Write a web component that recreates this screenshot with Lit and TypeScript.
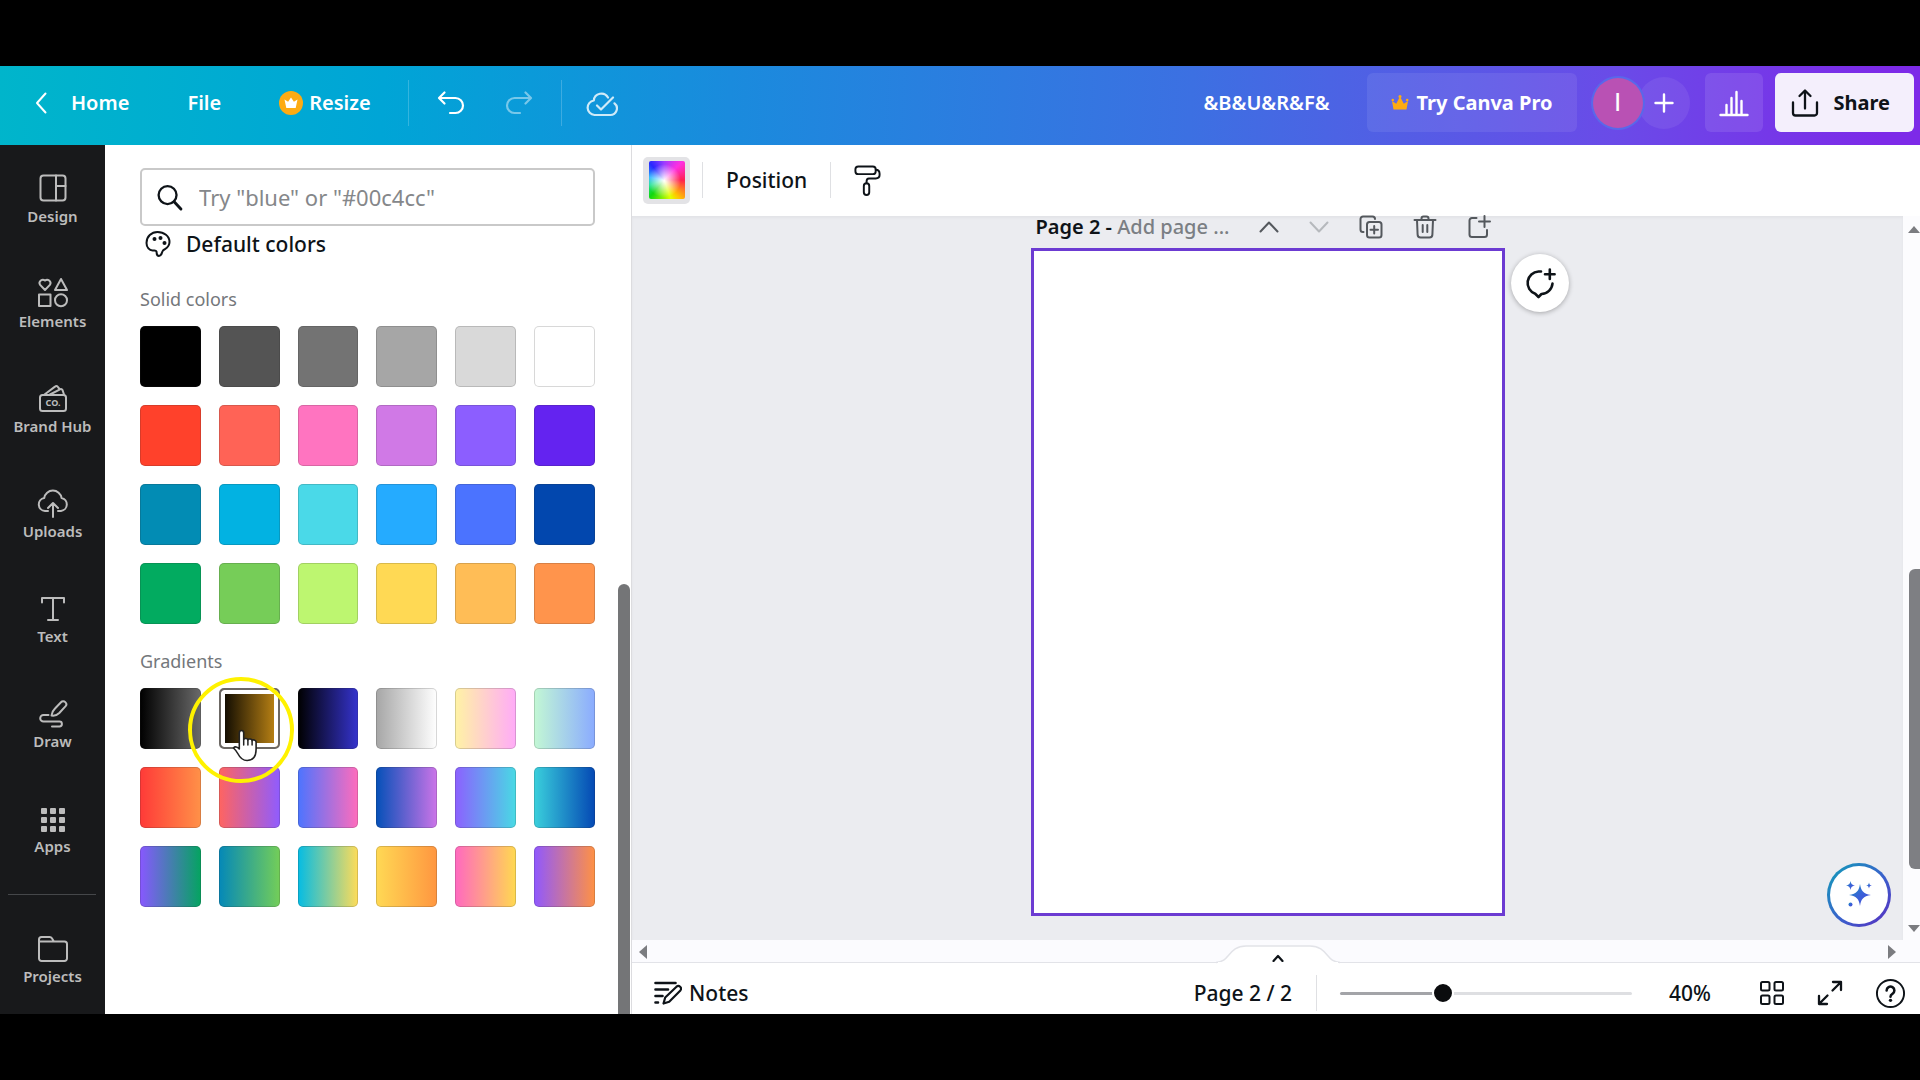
import { LitElement, html, svg, css, nothing } from "lit";
import { customElement, property, state } from "lit/decorators.js";
import { classMap } from "lit/directives/class-map.js";
import { styleMap } from "lit/directives/style-map.js";

const ICONS: Record<string, { box: string; body: unknown }> = {
  back: { box: "0 0 12 22", body: svg`<path d="M10.500 1.500 2 11l8.500 9.500" stroke-width="2"/>` },
  crownBadge: {
    box: "0 0 24 24",
    body: svg`<circle cx="12" cy="12" r="12" fill="#fdab12" stroke="none"/><path d="M5.500 8.500l3.600 2.300L12 6.500l2.900 4.300 3.600-2.300-1.800 8.500H7.300z" fill="#fff" stroke="none"/>`,
  },
  crown: {
    box: "0 0 18 18",
    body: svg`<path d="M2.500 15.500h13L17 7l-4.200 2.700L9 2.500 5.200 9.700 1 7z" fill="#fdab12" stroke="none"/><circle cx="1.800" cy="6" r="1.300" fill="#fdab12" stroke="none"/><circle cx="9" cy="2.600" r="1.500" fill="#fdab12" stroke="none"/><circle cx="16.200" cy="6" r="1.300" fill="#fdab12" stroke="none"/>`,
  },
  undo: { box: "0 0 28 26", body: svg`<path d="M7.500 2.500 2 8l5.500 5.500M2.500 8h16a7.500 7.500 0 0 1 0 15h-5.500" stroke-width="2.200"/>` },
  redo: { box: "0 0 28 26", body: svg`<path d="M20.500 2.500 26 8l-5.500 5.500M25.500 8h-16a7.500 7.500 0 0 0 0 15H15" stroke-width="2.200"/>` },
  cloudCheck: {
    box: "0 0 32 28",
    body: svg`<path d="M22 8.500A7.600 7.600 0 0 0 7.800 11.500 7.300 7.300 0 0 0 8.500 26h15.800a6.600 6.600 0 0 0 4.200-11.700M11 16.500l4 4L27 8.500" stroke-width="2.200"/>`,
  },
  plus: { box: "0 0 20 20", body: svg`<path d="M10 1.500v17M1.500 10h17" stroke-width="2.400"/>` },
  chart: { box: "0 0 30 28", body: svg`<path d="M1.500 26h27M7.500 25v-9M12.500 25V9M17.500 25V3M22.500 25V12" stroke-width="2.400"/>` },
  share: { box: "0 0 28 30", body: svg`<path d="M14 20.500V3M8.500 8 14 2.500 19.500 8M2 14.500V25a2.500 2.500 0 0 0 2.500 2.500h19A2.500 2.500 0 0 0 26 25V14.500" stroke-width="2.300"/>` },
  design: { box: "0 0 30 30", body: svg`<rect x="2.500" y="2.500" width="25" height="25" rx="3"/><path d="M18 2.500v25M18 13h9.500"/>` },
  elements: {
    box: "0 0 32 32",
    body: svg`<path d="M8 14 2.900 8.600A3.300 3.300 0 0 1 8 4.600a3.300 3.300 0 0 1 5.100 4zM24 3l6 11H18z"/><rect x="2" y="18.500" width="11.500" height="11.500"/><circle cx="24" cy="24.300" r="6"/>`,
  },
  brand: {
    box: "0 0 30 30",
    body: svg`<rect x="2" y="12" width="26" height="16" rx="2.500"/><path d="M6.500 11.500 17 3.600a2 2 0 0 1 2.800.3L21.500 6M12 11.500 22 6.300a2 2 0 0 1 2.600.9l1.400 4.300"/><text x="15" y="23" text-anchor="middle" font-size="9" font-weight="700" fill="currentColor" stroke="none">CO.</text>`,
  },
  uploads: { box: "0 0 32 30", body: svg`<path d="M11 23H8a6.500 6.500 0 0 1-.8-12.900A8.800 8.800 0 0 1 24.600 10 6.600 6.600 0 0 1 24 23h-3M16 29V15.500M11 20l5-5 5 5"/>` },
  text: { box: "0 0 28 28", body: svg`<path d="M3 7.500V3h22v4.500M14 3v22M9 25h10"/>` },
  draw: {
    box: "0 0 30 30",
    body: svg`<path d="M13.500 17.500c.2-3 1.500-5 3.500-7l6-6.300a3 3 0 0 1 4.400 4.200L21.300 15c-2 2-4.600 3-7.800 2.500zM10.500 17H5.500a3.300 3.300 0 0 0 0 6.600h16a2.400 2.400 0 0 1 0 4.800H14"/>`,
  },
  apps: {
    box: "0 0 26 26",
    body: svg`${[1, 10, 19].map((y) => [1, 10, 19].map((x) => svg`<rect x=${x} y=${y} width="6" height="6" rx="1" fill="currentColor" stroke="none"/>`))}`,
  },
  folder: { box: "0 0 32 28", body: svg`<path d="M2 23.500V4.500A2.500 2.500 0 0 1 4.500 2h8.200c1 0 1.700.4 2.200 1.200l2 3.300h10.600A2.500 2.500 0 0 1 30 9v14.500a2.500 2.500 0 0 1-2.500 2.500h-23A2.500 2.500 0 0 1 2 23.500zM2 6.500h14"/>` },
  search: { box: "0 0 28 28", body: svg`<circle cx="12" cy="11.500" r="9.300" stroke-width="2.400"/><path d="m18.800 18.500 7 7.500" stroke-width="3"/>` },
  palette: {
    box: "0 0 26 28",
    body: svg`<path d="M12.500 2C6.500 2 1.500 6.500 1.500 13c0 4.500 3 7.500 6 7.500 2.500 0 3.500-.5 4 1 .4 1.600-.5 4.500 2.500 4.500 3 0 2.300-3.300 4-5.500 2-2 6.500-2.500 6.500-8.500 0-6-5.500-10-12-10z" stroke-width="2"/><g fill="currentColor" stroke="none"><circle cx="9.500" cy="9" r="2"/><circle cx="15.500" cy="8" r="2"/><circle cx="19.500" cy="13" r="2"/></g>`,
  },
  roller: {
    box: "0 0 30 34",
    body: svg`<rect x="2.500" y="2.500" width="21" height="8" rx="3"/><path d="M23.500 6c3 0 4 1.500 4 4v1.500c0 2.500-1.500 3.500-4 3.500h-7c-2 0-2.500 1-2.500 3.500V20"/><rect x="11.200" y="20" width="5.600" height="12" rx="2.800"/>`,
  },
  up: { box: "0 0 20 12", body: svg`<path d="m1.500 10.500 8.500-9 8.500 9"/>` },
  down: { box: "0 0 20 12", body: svg`<path d="m1.500 1.500 8.500 9 8.500-9"/>` },
  caret: { box: "0 0 12 8", body: svg`<path d="M1.500 7 6 2l4.500 5" stroke-width="2.200"/>` },
  duplicate: { box: "0 0 24 24", body: svg`<rect x="8" y="7" width="14.500" height="15.500" rx="2.500"/><path d="M15.200 11v7.500M11.500 14.800H19M4.500 17H4a2.500 2.500 0 0 1-2.500-2.500V4A2.500 2.500 0 0 1 4 1.500h9.500A2.500 2.500 0 0 1 16 4"/>` },
  trash: { box: "0 0 24 24", body: svg`<path d="M1.500 5h21M4 5l.6 14.500a3 3 0 0 0 3 3h8.800a3 3 0 0 0 3-3L20 5M8.500 5V3.500a2 2 0 0 1 2-2h3a2 2 0 0 1 2 2V5M9.700 10v7M14.300 10v7"/>` },
  addPage: { box: "0 0 24 24", body: svg`<path d="M9.500 3H5a2.500 2.500 0 0 0-2.500 2.500v14A2.500 2.500 0 0 0 5 22h12.500a2.500 2.500 0 0 0 2.500-2.500V15M17.500 1v11M12 6.500h11"/>` },
  comment: {
    box: "0 0 32 32",
    body: svg`<path d="M17 4.500h-2.500A11.500 11.500 0 0 0 11.200 26.800L14.500 30l3-3A11.500 11.500 0 0 0 28.500 16.500M25.800 2.500v9.500M21 7.200h9.600" stroke-width="2.600"/>`,
  },
  notes: {
    box: "0 0 28 26",
    body: svg`<path d="M1.500 3h20M1.500 9.500H14M1.500 16h7M1.500 22.500h2.500" stroke-width="2.600"/><path d="m9.500 23.500 1.700-6L22.500 6.700a2.700 2.700 0 0 1 3.900 3.700L15.200 21.700z" stroke-width="2.200"/>`,
  },
  grid: {
    box: "0 0 26 26",
    body: svg`<rect x="2" y="2" width="8.500" height="8.500" rx="1.500"/><rect x="15.500" y="2" width="8.500" height="8.500" rx="1.500"/><rect x="2" y="15.500" width="8.500" height="8.500" rx="1.500"/><rect x="15.500" y="15.500" width="8.500" height="8.500" rx="1.500"/>`,
  },
  expand: { box: "0 0 26 26", body: svg`<path d="M16 2h8v8M24 2l-8.500 8.500M2 16v8h8M2 24l8.500-8.500" stroke-width="2.300"/>` },
  help: { box: "0 0 32 32", body: svg`<circle cx="16" cy="16" r="14"/><path d="M12 12.800a4 4 0 1 1 6 3.500c-1.400.8-2 1.500-2 3" stroke-width="2.600"/><circle cx="16" cy="23" r="1.700" fill="currentColor" stroke="none"/>` },
  magic: {
    box: "0 0 28 28",
    body: svg`<defs><linearGradient id="spark" x1="0" y1="0" x2="1" y2="1"><stop offset="0" stop-color="#1296b8"/><stop offset=".5" stop-color="#3a62d8"/><stop offset="1" stop-color="#4a4ad8"/></linearGradient></defs><g fill="url(#spark)" stroke="none"><path d="M15 3c1.200 7 3 9.500 11 11-8 1.500-9.800 4-11 11-1.200-7-3-9.500-11-11 8-1.500 9.800-4 11-11z"/><path d="M5.500 0c.6 3 1.400 3.900 4.500 4.500C6.900 5.100 6.100 6 5.500 9 4.900 6 4.100 5.100 1 4.500 4.100 3.900 4.900 3 5.500 0z"/><path d="M24 1.500c.4 2.100 1 2.600 3 3-2 .4-2.600.9-3 3-.4-2.100-1-2.600-3-3 2-.4 2.600-.9 3-3z"/><circle cx="5.500" cy="23.500" r="2"/></g>`,
  },
  hand: {
    box: "0 0 28 34",
    body: svg`<path d="M9.500 2.500c1.500 0 2.200 1 2.200 2.400v6.600c0-1.500 4.200-1.500 4.200.5 0-1.400 4.200-1.300 4.200.7 0-1.300 4-1.200 4 1.300V21c0 7-3 11.500-9 11.500-5 0-7-2.500-9-6.500-1.300-2.500-3-4.500-4.600-6 1.500-2 4-1.200 5.800 1V4.900c0-1.400.7-2.400 2.200-2.400z" fill="#fff" stroke="#222" stroke-width="1.600"/><path d="M11.700 11v6M15.900 12v5M20.100 13v4" stroke="#222" stroke-width="1.500"/>`,
  },
};

@customElement("ui-icon")
export class UiIcon extends LitElement {
  @property() name = "";
  @property({ type: Number }) size = 24;

  static styles = css`
    :host { display: inline-flex; flex: none; }
    .glyph { display: block; fill: none; stroke: currentColor; stroke-width: 2; stroke-linecap: round; stroke-linejoin: round; font-family: "Noto Sans", sans-serif; }
  `;

  render() {
    const icon = ICONS[this.name];
    return icon
      ? html`<svg class="glyph" width=${this.size} viewBox=${icon.box} aria-hidden="true">${icon.body}</svg>`
      : nothing;
  }
}

const SIDE_ITEMS = [
  { icon: "design", size: 30, label: "Design" },
  { icon: "elements", size: 32, label: "Elements" },
  { icon: "brand", size: 30, label: "Brand Hub" },
  { icon: "uploads", size: 32, label: "Uploads" },
  { icon: "text", size: 28, label: "Text" },
  { icon: "draw", size: 30, label: "Draw" },
  { icon: "apps", size: 26, label: "Apps" },
];

const SOLIDS = [
  "#000000", "#545454", "#737373", "#a6a6a6", "#d9d9d9", "#ffffff",
  "#ff412b", "#ff6356", "#ff74c0", "#d079e6", "#8c5eff", "#6423f0",
  "#028cb4", "#02b2e2", "#4ad9e8", "#25abff", "#4b73ff", "#0247ae",
  "#02ab60", "#76cd58", "#bdf670", "#ffd954", "#ffbd56", "#ff944c",
];

const GRADIENTS: [string, string][] = [
  ["#000000", "#6a6a6a"], ["#000000", "#c88c16"], ["#000000", "#3533cd"],
  ["#a6a6a6", "#ffffff"], ["#fff3a4", "#ffabf8"], ["#c3f8d4", "#8aabff"],
  ["#ff3a38", "#ff9148"], ["#ff6460", "#8f5cff"], ["#4c74ff", "#ff6cbc"],
  ["#0450b8", "#cc74e8"], ["#8c60ff", "#48dae4"], ["#3ad0dc", "#0448b4"],
  ["#8858ff", "#04a460"], ["#0488b8", "#74ce58"], ["#04bce4", "#ffdc58"],
  ["#ffd954", "#ff9640"], ["#ff68c0", "#ffd950"], ["#8f58ff", "#ff9144"],
];

@customElement("color-panel")
export class ColorPanel extends LitElement {
  @state() private hovered = 1;

  static styles = css`
    :host { display: flex; min-height: 0; background: #fff; color: #0e1318; position: relative; }
    .content { flex: 1; padding: 23px 23px 0 35px; }
    .search { display: flex; align-items: center; gap: 16px; height: 58px; box-sizing: border-box; border: 2px solid #c9c9c9; border-radius: 5px; padding: 0 14px; }
    .field { flex: 1; min-width: 0; border: 0; outline: 0; padding: 0; background: none; font: inherit; font-size: 22px; color: inherit; }
    .field::placeholder { color: #85878a; opacity: 1; }
    .heading { display: flex; align-items: center; gap: 15px; margin: 3px 0 0 5px; height: 30px; padding-bottom: 3px; font-size: 21px; font-weight: 500; }
    .label { margin: 24px 0 14px; font-size: 18px; line-height: 26px; font-weight: 400; color: #74777b; }
    .swatches { display: grid; grid-template-columns: repeat(6, 1fr); gap: 18px; }
    .swatch { height: 61px; padding: 0; border: 1px solid rgba(40, 40, 40, 0.18); border-radius: 5px; background-origin: border-box; cursor: pointer; }
    .hover { border: 2px solid #6c6864; box-shadow: inset 0 0 0 4px #fff; }
    .scroll { flex: none; width: 12px; margin: 439px 1px 0 0; border-radius: 6px 6px 0 0; background: #747577; }
    .spot { position: absolute; left: 83px; top: 532px; width: 98px; height: 98px; border: 4px solid #fff200; border-radius: 50%; pointer-events: none; }
    .pointer { position: absolute; left: 127px; top: 583px; pointer-events: none; }
  `;

  render() {
    return html`
      <div class="content">
        <label class="search">
          <ui-icon name="search" size="27"></ui-icon>
          <input class="field" type="search" aria-label="Search colors" placeholder='Try "blue" or "#00c4cc"' />
        </label>
        <h2 class="heading"><ui-icon name="palette" size="26"></ui-icon>Default colors</h2>
        <h3 class="label">Solid colors</h3>
        <div class="swatches">
          ${SOLIDS.map((c) => html`<button class="swatch" aria-label=${c} style=${styleMap({ backgroundColor: c })}></button>`)}
        </div>
        <h3 class="label">Gradients</h3>
        <div class="swatches">
          ${GRADIENTS.map(
            ([a, b], i) => html`<button
              class=${classMap({ swatch: true, hover: i === this.hovered })}
              aria-label="${a} to ${b}"
              style=${styleMap({ backgroundImage: `linear-gradient(90deg, ${a}, ${b})` })}
              @mouseenter=${() => (this.hovered = i)}
            ></button>`
          )}
        </div>
      </div>
      <div class="scroll"></div>
      <div class="spot"></div>
      <ui-icon class="pointer" name="hand" size="28"></ui-icon>
    `;
  }
}

@customElement("app-root")
export class AppRoot extends LitElement {
  @state() private zoom = 34;

  static styles = css`
    :host { display: block; font-family: "Noto Sans", "Liberation Sans", sans-serif; font-size: 20px; color: #0e1318; }
    button { font: inherit; color: inherit; background: none; border: 0; padding: 0; cursor: pointer; display: flex; align-items: center; justify-content: center; white-space: nowrap; }
    a { color: inherit; text-decoration: none; }
    .frame { box-sizing: border-box; min-height: 100vh; padding: 66px 0; background: #000; display: flex; flex-direction: column; }
    .header { height: 79px; box-sizing: border-box; display: flex; align-items: center; padding: 0 6px 6px; color: #fff; font-weight: 600; background: linear-gradient(93deg, #00b5cb 0%, #00a5d6 20%, #1a8bdd 38%, #3c70e2 62%, #6a4be8 84%, #7d2ae8 98%); }
    .nav { height: 58px; padding: 0 29px; display: flex; align-items: center; gap: 6px; }
    .home { gap: 24px; }
    .rule { width: 1px; height: 46px; background: rgba(255, 255, 255, 0.2); }
    .tool { height: 58px; padding: 0 20px; }
    .after { margin-left: 8px; }
    .near { margin-left: 4px; }
    .dim { color: rgba(255, 255, 255, 0.45); }
    .soft { color: rgba(255, 255, 255, 0.8); }
    .grow { flex: 1; }
    .doc { margin-right: 37px; }
    .pro { height: 59px; padding: 0 24px; gap: 8px; border-radius: 6px; background: rgba(255, 255, 255, 0.08); margin-right: 16px; font-weight: 700; }
    .avatar { width: 50px; height: 50px; border-radius: 50%; background: #b951b4; box-shadow: 0 0 0 2px #5968ea; font-family: "Liberation Sans", Inter, sans-serif; font-weight: 400; font-size: 26px; z-index: 1; }
    .add { width: 52px; height: 52px; border-radius: 50%; background: rgba(255, 255, 255, 0.07); margin: 0 15px 0 -5px; }
    .stats { width: 58px; height: 59px; border-radius: 6px; background: rgba(255, 255, 255, 0.1); margin-right: 12px; }
    .share { height: 59px; padding: 0 24px 0 16px; gap: 15px; border-radius: 6px; background: #f4effc; color: #0e1318; font-weight: 700; }
    .body { flex: 1; display: grid; grid-template-columns: 105px 526px 1fr; }
    .side { background: #18191b; color: #bcbcbc; display: flex; flex-direction: column; font-size: 15px; font-weight: 600; }
    .entry { height: 105px; display: flex; flex-direction: column; align-items: center; justify-content: flex-start; box-sizing: border-box; padding-top: 25px; }
    .entry:last-child { height: auto; }
    .pic { height: 33px; display: flex; align-items: flex-end; }
    .name { line-height: 26px; }
    .split { height: 1px; margin: 14px 9px 10px 8px; background: #45474a; }
    .work { min-width: 0; display: flex; flex-direction: column; border-left: 1px solid #dcdcdf; background: #fff; }
    .bar { height: 71px; box-sizing: border-box; padding-bottom: 1px; display: flex; align-items: center; font-size: 21px; font-weight: 500; }
    .paint { width: 47px; height: 47px; margin: 0 12px 0 11px; border-radius: 5px; background: #e3e3e6; }
    .rainbow { width: 36px; height: 38px; border-radius: 2px; background: radial-gradient(circle at 42% 52%, #fff 0, rgba(255, 255, 255, 0) 58%), conic-gradient(from 0deg at 42% 50%, #9c3cff, #ff30e0 45deg, #ff2050 90deg, #ffc400 140deg, #e0ff00 160deg, #10d810 220deg, #18e090 250deg, #20b8ff 280deg, #2828ff 320deg, #9c3cff); }
    .line { width: 1px; height: 36px; background: #dfe0e3; }
    .position { padding: 0 23px; height: 48px; }
    .roll { padding: 0 22px; height: 48px; }
    .view { flex: 1; display: grid; grid-template-columns: 1fr 17px; grid-template-rows: 1fr 23px; }
    .stage { position: relative; background: #ebecf0; display: flex; flex-direction: column; align-items: center; padding-bottom: 24px; box-shadow: inset 0 2px 3px rgba(0, 0, 0, 0.04); }
    .sheet { flex: 1; width: 474px; display: flex; flex-direction: column; }
    .tools { display: flex; align-items: center; height: 22px; padding: 0 14px 10px 5px; color: #54585d; }
    .title { flex: 1; line-height: 22px; color: #7b7f84; font-weight: 500; margin: 0; white-space: nowrap; }
    .strong { color: #0e1318; font-weight: 600; }
    .ops { display: flex; align-items: center; gap: 30px; }
    .faint { color: #b6b9bd; }
    .paper { position: relative; flex: 1; background: #fff; border: 3px solid #6c3bd2; }
    .comment { position: absolute; left: calc(100% + 9px); top: 3px; width: 58px; height: 58px; border-radius: 50%; background: #fff; box-shadow: 0 1px 5px rgba(0, 0, 0, 0.3); }
    .magic { position: absolute; right: 12px; bottom: 13px; width: 64px; height: 64px; box-sizing: border-box; border: 3px solid transparent; border-radius: 50%; background: linear-gradient(#fff, #fff) padding-box, linear-gradient(135deg, #10a0b8, #3a60cc 55%, #5a2cc0) border-box; }
    .vscroll { background: #fcfcfe; display: flex; flex-direction: column; align-items: flex-end; padding: 10px 0 8px; color: #7b7c80; }
    .thumb { width: 11px; height: 300px; margin: auto 0 56px; border-radius: 6px 0 0 6px; background: #7e7f83; }
    .tri-up, .tri-down { width: 0; border: 6px solid transparent; }
    .tri-up { border-top: 0; border-bottom: 7px solid currentColor; }
    .tri-down { border-bottom: 0; border-top: 7px solid currentColor; }
    .hscroll { grid-column: 1 / -1; position: relative; box-sizing: border-box; background: #fbfbfe; border-bottom: 1px solid #e2e3e8; display: flex; align-items: center; justify-content: space-between; padding: 1px 24px 0 7px; color: #7b7c80; }
    .tri-left, .tri-right { width: 0; border: 7px solid transparent; }
    .tri-left { border-left: 0; border-right: 8px solid currentColor; }
    .tri-right { border-right: 0; border-left: 8px solid currentColor; }
    .tab { position: absolute; left: 50%; bottom: -3px; margin-left: -60px; width: 124px; height: 20px; color: #0e1318; }
    .hump { position: absolute; inset: 0; }
    .tab ui-icon { position: relative; top: 3px; }
    .footer { height: 51px; box-sizing: border-box; padding-top: 9px; display: flex; align-items: center; color: #0e1318; font-size: 21px; font-weight: 500; }
    .notes { gap: 7px; height: 40px; padding: 0 22px; }
    .count { margin-right: 24px; }
    .slider { appearance: none; width: 292px; height: 24px; margin: 0 37px 0 23px; background: none; }
    .slider::-webkit-slider-runnable-track { height: 3px; border-radius: 2px; background: linear-gradient(90deg, #a3a4a8 var(--fill), #dedfe2 var(--fill)); }
    .slider::-webkit-slider-thumb { appearance: none; width: 22px; height: 22px; margin-top: -10px; border: 2px solid #fff; border-radius: 50%; background: #0b0c0e; }
    .percent { margin-right: 48px; }
    .end { display: flex; gap: 32px; padding-right: 14px; align-items: center; }
  `;

  private onZoom(e: Event) {
    this.zoom = Number((e.target as HTMLInputElement).value);
  }

  private entry(item: { icon: string; size: number; label: string }) {
    return html`<button class="entry">
      <span class="pic"><ui-icon name=${item.icon} size=${item.size}></ui-icon></span>
      <span class="name">${item.label}</span>
    </button>`;
  }

  render() {
    return html`
      <div class="frame">
        <header class="header">
          <a class="nav home" href="#home"><ui-icon name="back" size="12"></ui-icon>Home</a>
          <button class="nav">File</button>
          <button class="nav"><ui-icon name="crownBadge" size="24"></ui-icon>Resize</button>
          <span class="rule after"></span>
          <button class="tool after" aria-label="Undo"><ui-icon name="undo" size="28"></ui-icon></button>
          <button class="tool dim" aria-label="Redo"><ui-icon name="redo" size="28"></ui-icon></button>
          <span class="rule after"></span>
          <button class="tool soft near" aria-label="All changes saved"><ui-icon name="cloudCheck" size="32"></ui-icon></button>
          <span class="grow"></span>
          <span class="doc">&amp;B&amp;U&amp;R&amp;F&amp;</span>
          <button class="pro"><ui-icon name="crown" size="18"></ui-icon>Try Canva Pro</button>
          <button class="avatar" aria-label="Account">I</button>
          <button class="add" aria-label="Add member"><ui-icon name="plus" size="20"></ui-icon></button>
          <button class="stats" aria-label="Insights"><ui-icon name="chart" size="30"></ui-icon></button>
          <button class="share"><ui-icon name="share" size="28"></ui-icon>Share</button>
        </header>
        <div class="body">
          <nav class="side">
            ${SIDE_ITEMS.map((i) => this.entry(i))}
            <div class="split"></div>
            ${this.entry({ icon: "folder", size: 32, label: "Projects" })}
          </nav>
          <color-panel></color-panel>
          <main class="work">
            <div class="bar">
              <button class="paint" aria-label="Background color"><span class="rainbow"></span></button>
              <span class="line"></span>
              <button class="position">Position</button>
              <span class="line"></span>
              <button class="roll" aria-label="Copy style"><ui-icon name="roller" size="29"></ui-icon></button>
            </div>
            <div class="view">
              <section class="stage">
                <div class="sheet">
                  <div class="tools">
                    <p class="title"><span class="strong">Page 2 - </span>Add page ...</p>
                    <div class="ops">
                      <button aria-label="Move up"><ui-icon name="up" size="20"></ui-icon></button>
                      <button class="faint" aria-label="Move down"><ui-icon name="down" size="20"></ui-icon></button>
                      <button aria-label="Duplicate page"><ui-icon name="duplicate" size="24"></ui-icon></button>
                      <button aria-label="Delete page"><ui-icon name="trash" size="24"></ui-icon></button>
                      <button aria-label="Add page"><ui-icon name="addPage" size="24"></ui-icon></button>
                    </div>
                  </div>
                  <div class="paper">
                    <button class="comment" aria-label="Add comment"><ui-icon name="comment" size="32"></ui-icon></button>
                  </div>
                </div>
                <button class="magic" aria-label="Assistant"><ui-icon name="magic" size="28"></ui-icon></button>
              </section>
              <div class="vscroll"><span class="tri-up"></span><span class="thumb"></span><span class="tri-down"></span></div>
              <div class="hscroll">
                <span class="tri-left"></span><span class="tri-right"></span>
                <button class="tab" aria-label="Show pages">
                  <svg class="hump" viewBox="0 0 124 20" aria-hidden="true"><path d="M0 17.500C14 17.500 12 1 30 1H94C112 1 110 17.500 124 17.500" fill="#fff" stroke="#e2e3e8" stroke-width="1.500" /><path d="M2 18.500h120" stroke="#fff" stroke-width="3" /></svg>
                  <ui-icon name="caret" size="12"></ui-icon>
                </button>
              </div>
            </div>
            <footer class="footer">
              <button class="notes"><ui-icon name="notes" size="28"></ui-icon>Notes</button>
              <span class="grow"></span>
              <span class="count">Page 2 / 2</span>
              <span class="line"></span>
              <input class="slider" type="range" min="0" max="100" aria-label="Zoom" .value=${String(this.zoom)} style=${styleMap({ "--fill": `${this.zoom}%` })} @input=${this.onZoom} />
              <span class="percent">40%</span>
              <div class="end">
                <button aria-label="Grid view"><ui-icon name="grid" size="26"></ui-icon></button>
                <button aria-label="Full screen"><ui-icon name="expand" size="26"></ui-icon></button>
                <button aria-label="Help"><ui-icon name="help" size="31"></ui-icon></button>
              </div>
            </footer>
          </main>
        </div>
      </div>
    `;
  }
}
